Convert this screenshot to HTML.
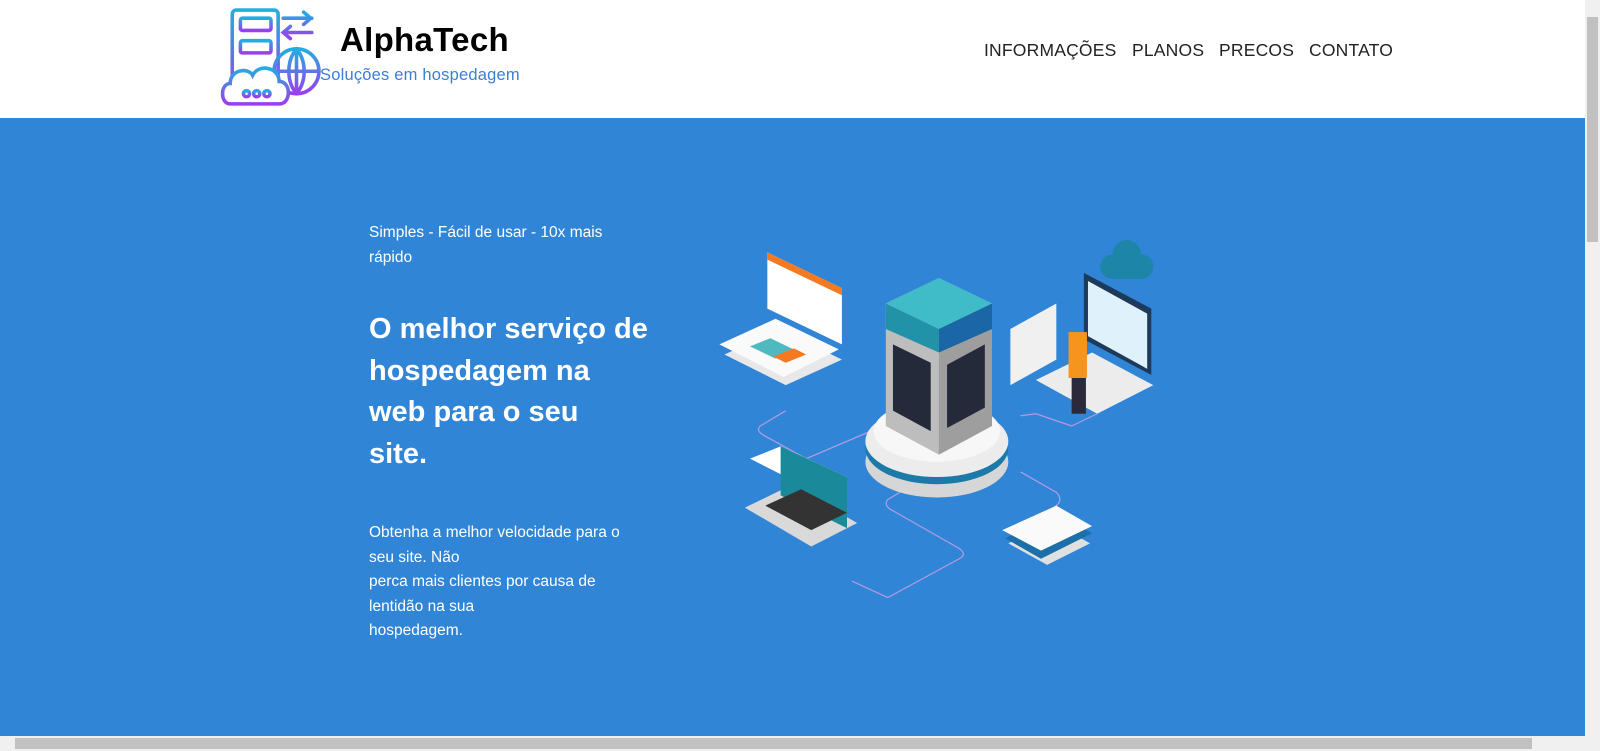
<!DOCTYPE html>
<html><head><meta charset="utf-8"><style>
*{margin:0;padding:0;box-sizing:border-box}
body{width:1600px;height:751px;overflow:hidden;background:#fff;font-family:"Liberation Sans",sans-serif;position:relative}
.hdr{position:absolute;left:0;top:0;width:1585px;height:118px;background:#fff}
.brand{position:absolute;left:340px;top:21px;font-size:33px;font-weight:bold;color:#000;letter-spacing:0.3px}
.sub{position:absolute;left:320px;top:66px;font-size:16.5px;color:#3b7fd6;letter-spacing:0.2px}
.nav{position:absolute;top:40px;font-size:17.5px;color:#222;letter-spacing:0.2px}
.hero{position:absolute;left:0;top:118px;width:1585px;height:618px;background:#3085d6;color:#fff}
.t1{position:absolute;left:369px;top:102px;font-size:15.5px;line-height:25px;white-space:nowrap}
.t2{position:absolute;left:369px;top:191px;font-size:29px;font-weight:bold;line-height:41.5px;white-space:nowrap}
.t3{position:absolute;left:369px;top:403px;font-size:15.5px;line-height:24.5px;white-space:nowrap}
.vs{position:absolute;left:1585px;top:0;width:15px;height:751px;background:#f0f0f0}
.vth{position:absolute;left:1587px;top:17px;width:11px;height:225px;background:#c1c1c1}
.hs{position:absolute;left:0;top:736px;width:1585px;height:15px;background:#f0f0f0}
.hth{position:absolute;left:15px;top:738px;width:1517px;height:11px;background:#c1c1c1}
</style></head><body>
<div class="hdr">
<svg style="position:absolute;left:220px;top:8px" width="102" height="100" viewBox="0 0 100 98">
<defs><linearGradient id="g" x1="0" y1="0" x2="0" y2="1"><stop offset="0" stop-color="#22aee0"/><stop offset="1" stop-color="#9b3df0"/></linearGradient></defs>
<g fill="none" stroke="url(#g)" stroke-width="3.5" stroke-linecap="round">
<rect x="12" y="2" width="45" height="85" rx="4"/>
<rect x="20" y="10" width="30" height="12" rx="2"/>
<rect x="20" y="32" width="30" height="12" rx="2"/>
<path d="M62 10h28M82 4l7 6-7 6M90 24H62M69 18l-7 6 7 6"/>
<circle cx="75" cy="62" r="22"/><path d="M53 62h44M75 40v44M75 40c-10 12-10 32 0 44M75 40c10 12 10 32 0 44"/>
<path d="M10 94c-10 0-10-20 0-20 0-14 18-16 22-8 6-12 26-8 26 6 12 0 12 22 0 22z" fill="#fff"/>
<circle cx="26" cy="84" r="3"/><circle cx="36" cy="84" r="3"/><circle cx="46" cy="84" r="3"/>
</g></svg>
<div class="brand">AlphaTech</div>
<div class="sub">Soluções em hospedagem</div>
<div class="nav" style="left:984px">INFORMAÇÕES</div>
<div class="nav" style="left:1132px">PLANOS</div>
<div class="nav" style="left:1219px">PRECOS</div>
<div class="nav" style="left:1309px">CONTATO</div>
</div>
<div class="hero">
<div class="t1">Simples - Fácil de usar - 10x mais<br>rápido</div>
<div class="t2">O melhor serviço de<br>hospedagem na<br>web para o seu<br>site.</div>
<div class="t3">Obtenha a melhor velocidade para o<br>seu site. Não<br>perca mais clientes por causa de<br>lentidão na sua<br>hospedagem.</div>
<svg style="position:absolute;left:704px;top:114px" width="480" height="388" viewBox="0 0 470 380">
<g fill="none" stroke="#b49be0" stroke-width="1.2">
<path d="M80 175L55 190Q50 195 60 200L100 222L175 190"/>
<path d="M310 180L325 178L360 190L385 178"/>
<path d="M200 250L180 262Q175 268 185 273L250 310Q258 316 250 320L180 358L145 342"/>
<path d="M310 235L345 255Q352 262 345 268L330 280Q325 288 330 290"/>
</g>
<ellipse cx="228" cy="225" rx="70" ry="35" fill="#d6d6d6"/>
<ellipse cx="228" cy="212" rx="70" ry="35" fill="#1c7aa8"/>
<ellipse cx="228" cy="205" rx="70" ry="35" fill="#ececec"/>
<ellipse cx="228" cy="195" rx="62" ry="30" fill="#f7f7f7"/>
<path d="M178 70L230 45L282 70V190L230 218L178 190Z" fill="#bdbdbd"/>
<path d="M230 95L282 70V190L230 218Z" fill="#9e9e9e"/>
<path d="M178 70L230 45L282 70L230 95Z" fill="#3fbcc8"/>
<path d="M178 70L230 95V118L178 95Z" fill="#2192a8"/>
<path d="M230 95L282 70V95L230 118Z" fill="#1a66a6"/>
<path d="M185 110L222 128V195L185 175Z" fill="#252a3a"/>
<path d="M238 130L275 110V172L238 192Z" fill="#252a3a"/>
<path d="M20 120L75 95L135 125L80 150Z" fill="#e8e8e8"/>
<path d="M15 110L70 85L132 115L78 142Z" fill="#fafafa"/>
<path d="M45 112L65 104L90 116L70 124Z" fill="#4fb9c0"/><path d="M68 122L88 114L100 120L80 128Z" fill="#f47920"/>
<path d="M62 20L135 55V110L62 75Z" fill="#fff"/><path d="M62 20L135 55V62L62 27Z" fill="#f47920"/>
<path d="M300 95L345 70V125L300 150Z" fill="#f0f0f0"/>
<path d="M325 145L380 118L440 150L385 178Z" fill="#ececec"/>
<path d="M372 40L438 75V140L372 105Z" fill="#1d3a5a"/><path d="M376 48L434 80V134L376 102Z" fill="#dff1fb"/>
<rect x="357" y="98" width="18" height="45" fill="#f7941d"/><path d="M360 143h14v35h-14z" fill="#2a2a3a"/>
<path d="M400 22a14 14 0 0 1 28 0a12 12 0 0 1 0 24h-28a12 12 0 0 1 0-24z" fill="#1c85a8"/>
<path d="M40 270L85 248L150 285L105 308Z" fill="#d9d9d9"/>
<path d="M45 222L75 210L140 240L110 255Z" fill="#fff"/><path d="M75 210L140 240V290L75 258Z" fill="#1a8a9a"/>
<path d="M60 268L95 252L140 275L105 292Z" fill="#333"/>
<path d="M298 305L340 283L378 305L336 326Z" fill="#e0e0e0"/>
<path d="M295 300L345 275L380 295L330 320Z" fill="#1c6fa8"/>
<path d="M292 292L345 268L380 288L330 312Z" fill="#fafafa"/>
</svg>
</div>
<div class="vs"></div><div class="vth"></div>
<div class="hs"></div><div class="hth"></div>
</body></html>
